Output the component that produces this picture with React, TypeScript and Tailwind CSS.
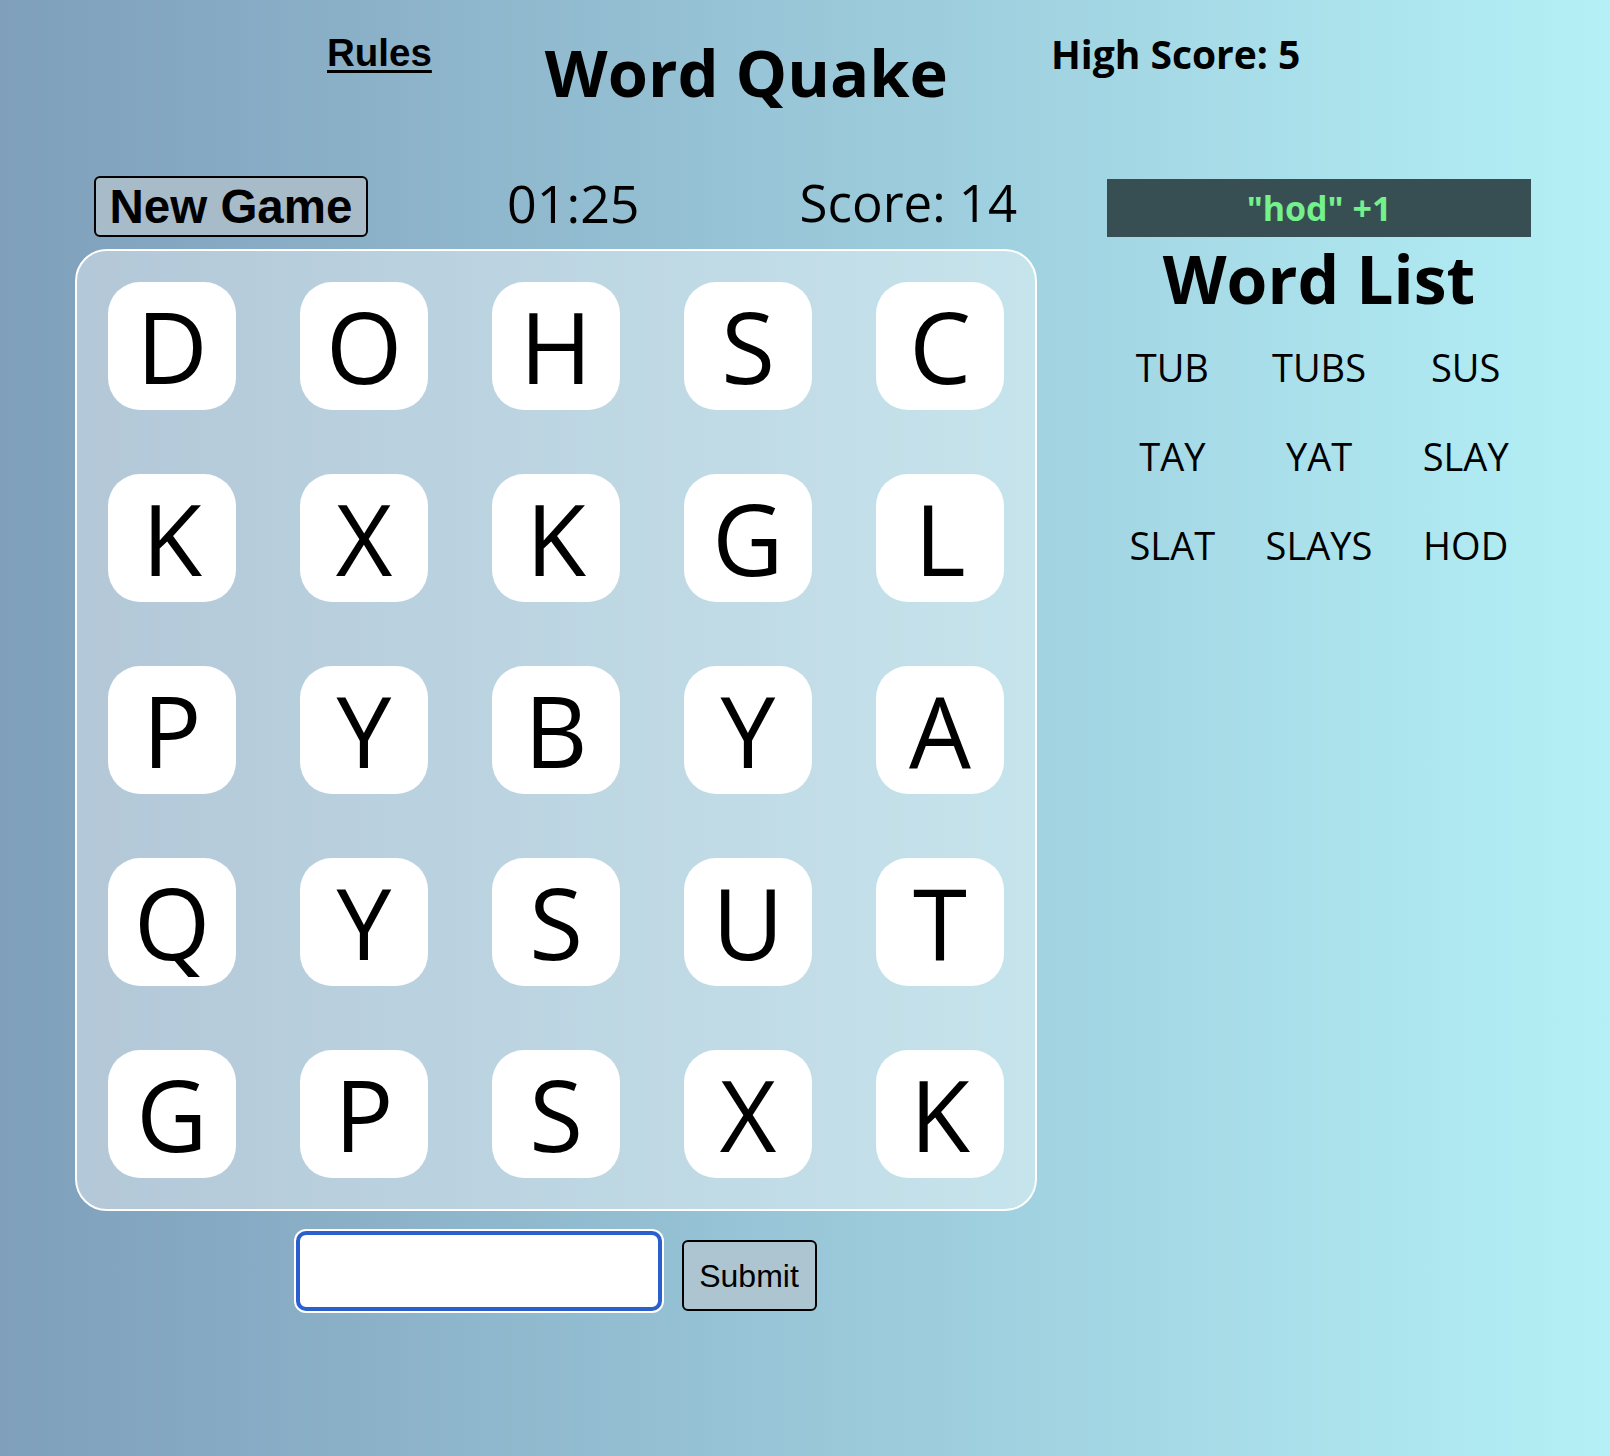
import React from 'react';

const board = [
  ['D', 'O', 'H', 'S', 'C'],
  ['K', 'X', 'K', 'G', 'L'],
  ['P', 'Y', 'B', 'Y', 'A'],
  ['Q', 'Y', 'S', 'U', 'T'],
  ['G', 'P', 'S', 'X', 'K'],
];

const words = ['TUB', 'TUBS', 'SUS', 'TAY', 'YAT', 'SLAY', 'SLAT', 'SLAYS', 'HOD'];

const sans = "font-['Open_Sans','Noto_Sans',sans-serif]";
const arial = "font-['Liberation_Sans',Arial,sans-serif]";

export default function App() {
  return (
    <div className={`min-h-screen w-full bg-linear-to-r from-[#7f9fbb] to-[#b4f0f6] text-black ${sans}`}>
      {/* Header */}
      <header className="flex items-start pl-[327px]">
        <a href="#" className={`mt-[34px] text-[38.5px] leading-none font-bold underline underline-offset-[4px] ${arial}`}>
          Rules
        </a>
        <h1 className="ml-[113px] mt-[40px] text-[65px] leading-none font-bold">Word Quake</h1>
        <div className="ml-[103px] mt-[34px] text-[39px] leading-none font-bold">High Score: 5</div>
      </header>

      <div className="flex pl-[75px] mt-[63px]">
        {/* Left column */}
        <div className="w-[962px] flex flex-col">
          <div className="flex items-center h-[61px] mt-[8px]">
            <button
              className={`ml-[19px] w-[274px] h-[61px] flex items-center justify-center bg-[#a8bbc8] border-2 border-black rounded-[6px] text-[47.5px] leading-none font-bold ${arial}`}
            >
              New Game
            </button>
            <div className="ml-[139px] -mt-[8px] text-[52px] leading-none">01:25</div>
            <div className="ml-[160px] -mt-[8px] text-[51px] leading-none">Score: 14</div>
          </div>

          <div className="mt-[12px] w-[962px] h-[962px] border-2 border-white rounded-[32px] bg-white/40 p-[31px] grid grid-cols-5 gap-[64px]">
            {board.flat().map((l, i) => (
              <div key={i} className="w-[128px] h-[128px] bg-white rounded-[32px] flex items-center justify-center text-[98px] leading-none">
                {l}
              </div>
            ))}
          </div>

          <div className="mt-[20px] flex items-end justify-center gap-[20px]">
            <input
              type="text"
              className="w-[366px] h-[80px] bg-white border-[4px] border-[#2b60cc] rounded-[10px] ring-2 ring-white outline-none"
            />
            <button className={`w-[135px] h-[71px] bg-[#adc5d0] border-2 border-black rounded-[6px] text-[32px] leading-none ${arial}`}>
              Submit
            </button>
          </div>
        </div>

        {/* Right column */}
        <div className="ml-[70px] w-[424px] flex flex-col items-center mt-[11px]">
          <div className="w-[424px] h-[58px] bg-[#374f52] flex items-center justify-center text-[34px] font-bold text-[#74f08c] leading-none">
            "hod" +1
          </div>
          <h2 className="mt-[8px] text-[66px] leading-none font-bold">Word List</h2>
          <div className="mt-[37px] w-[440px] grid grid-cols-3 gap-y-[51px]">
            {words.map((w) => (
              <div key={w} className="text-center text-[38px] leading-none">
                {w}
              </div>
            ))}
          </div>
        </div>
      </div>
    </div>
  );
}
